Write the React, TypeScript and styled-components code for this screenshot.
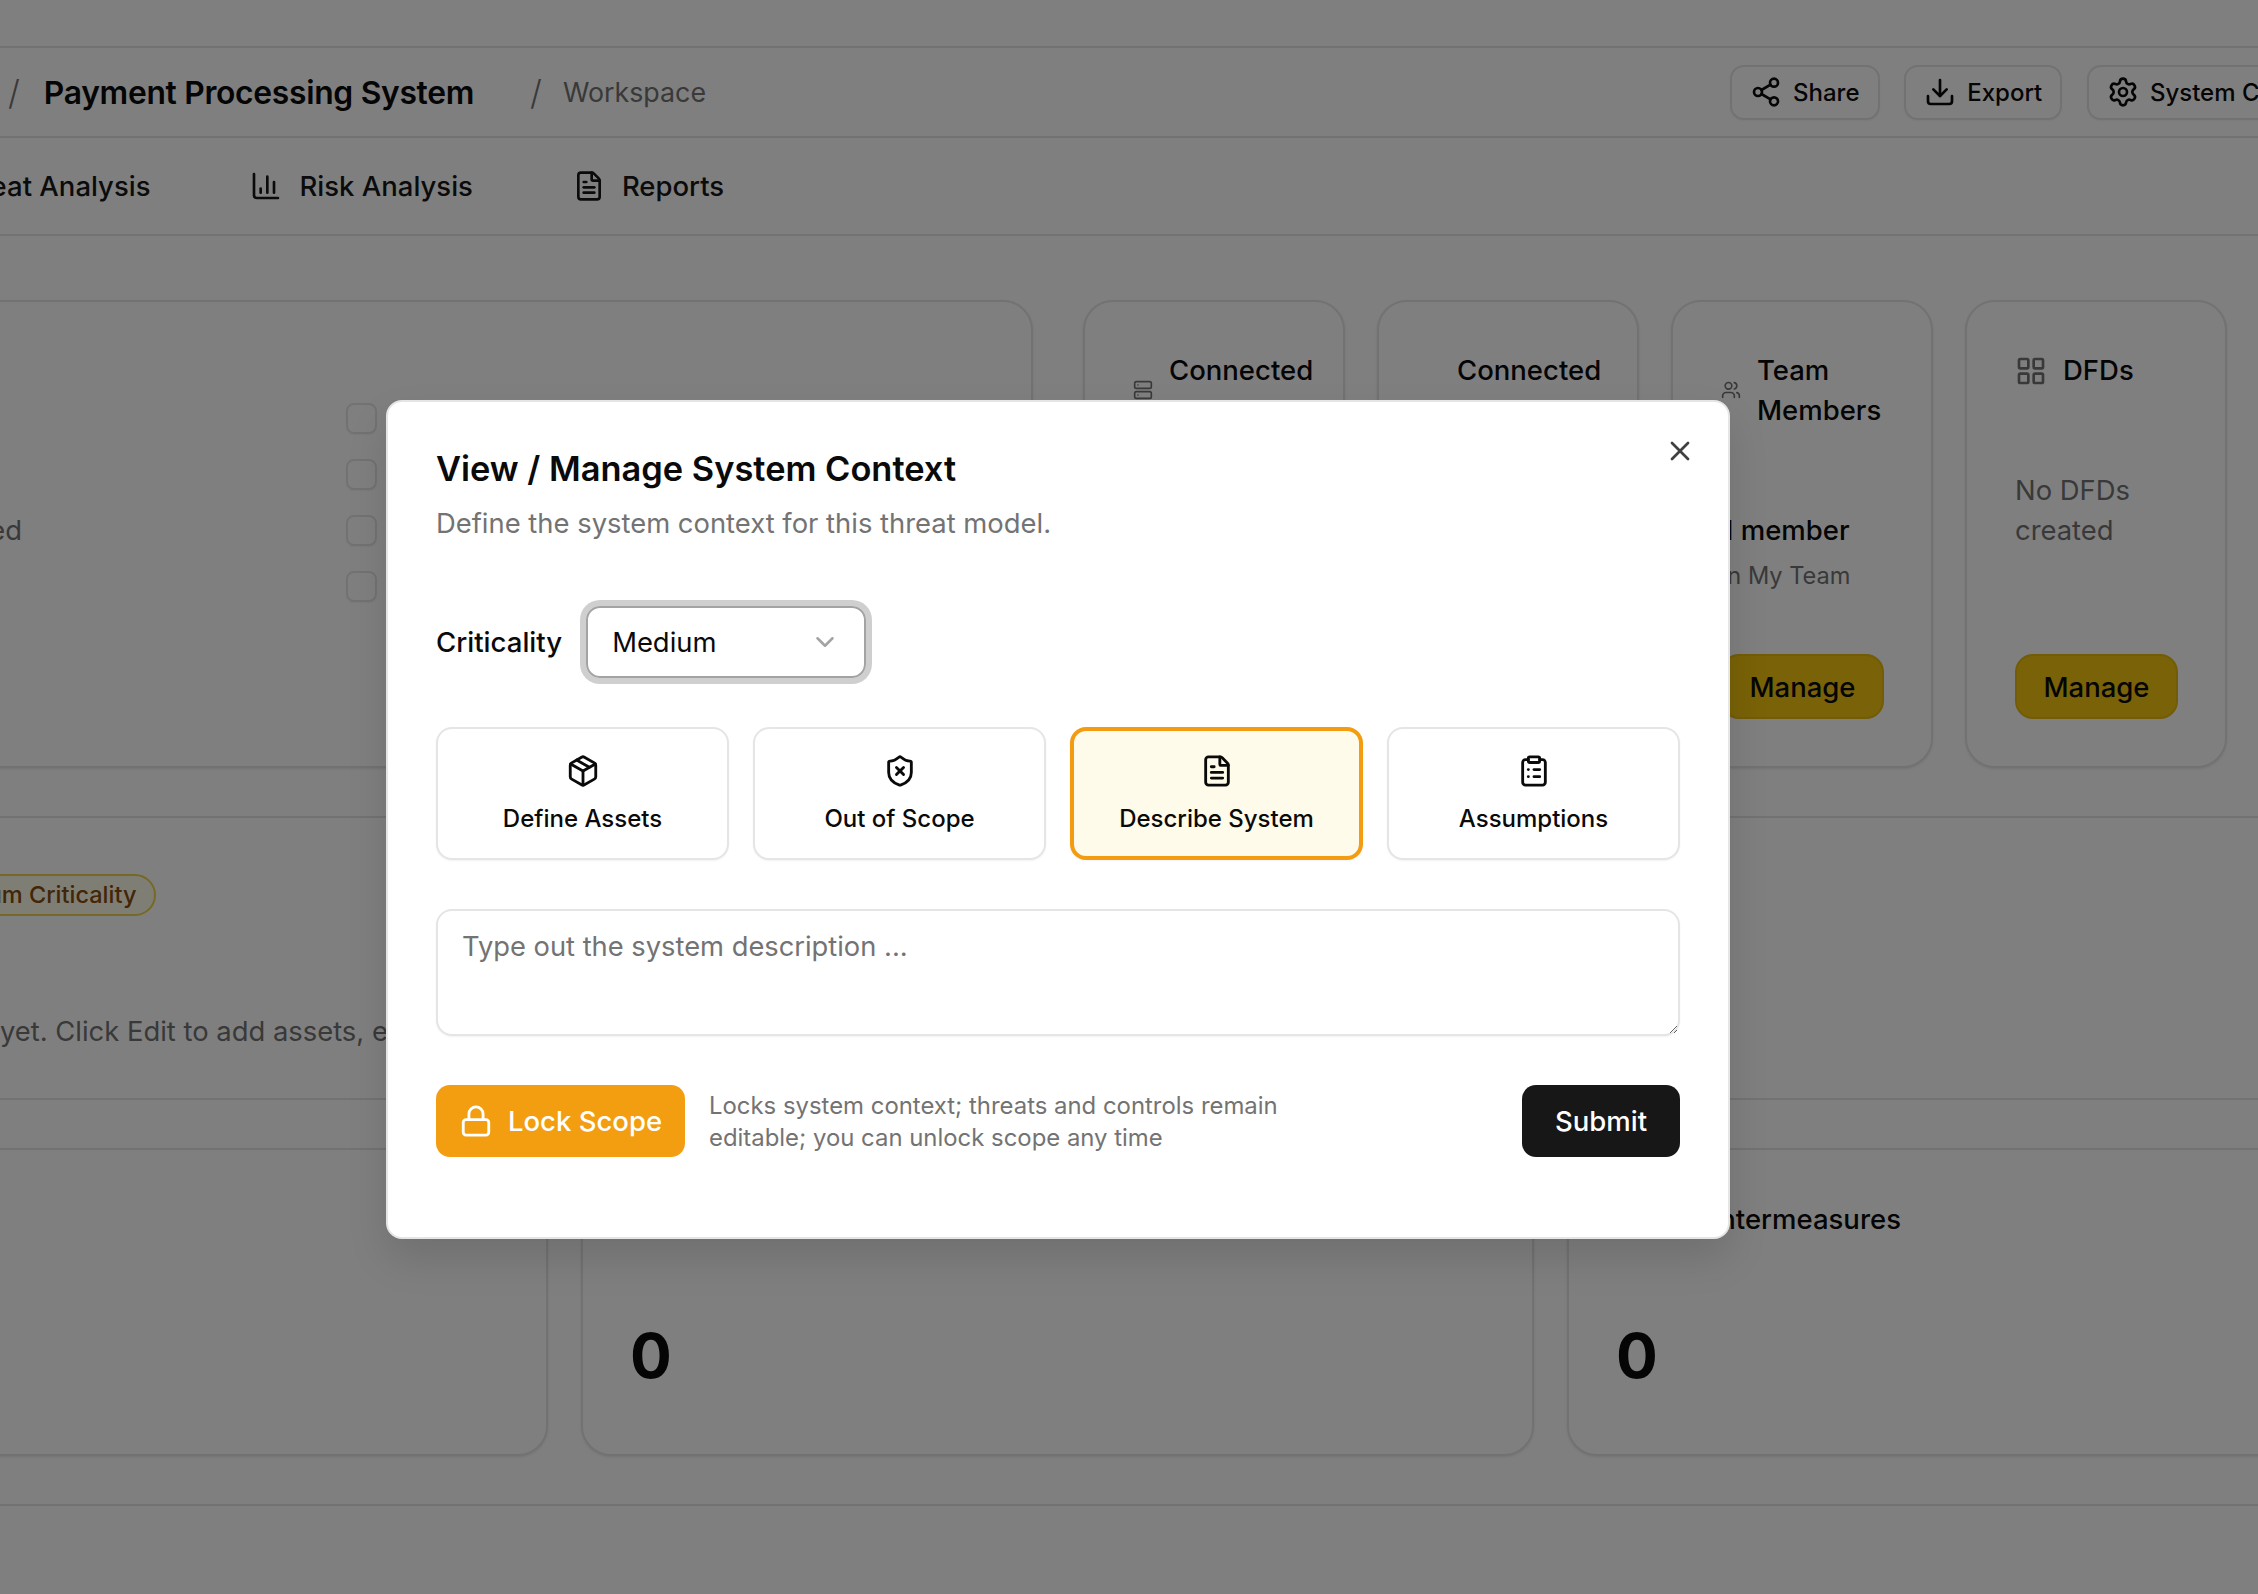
import styled, { createGlobalStyle } from "styled-components";
import {
  ChartColumn,
  ChevronDown,
  ClipboardList,
  Download,
  FileText,
  LayoutGrid,
  Lock,
  Package,
  Server,
  Settings,
  Share2,
  ShieldAlert,
  ShieldX,
  Users,
  X,
} from "lucide-react";

const GlobalStyle = createGlobalStyle`
  html, body {
    margin: 0;
    height: 100%;
    background: #fff;
    overflow: hidden;
    font-family: "Inter", "Liberation Sans", sans-serif;
    color: #0a0a0a;
  }
  * {
    box-sizing: border-box;
  }
`;

const Viewport = styled.div`
  width: 2258px;
  height: 1594px;
  overflow: hidden;
  position: relative;
`;

// the app is wider than the window here, so it starts left of the edge
const Shell = styled.div`
  width: 3000px;
  margin-left: -420px;
`;

const TopStrip = styled.div`
  height: 48px;
  border-bottom: 2px solid #e5e5e5;
`;

const HeaderRow = styled.header`
  height: 90px;
  border-bottom: 2px solid #e5e5e5;
  display: flex;
  align-items: center;
  padding-left: 221px;
`;

const Crumb = styled.span`
  font-size: 26.8px;
  color: #737373;
`;

const CurrentCrumb = styled(Crumb)`
  margin-left: -3px;
`;

const Slash = styled.span`
  font-size: 34px;
  font-weight: 300;
  color: #737373;
  margin: 0 24px;
`;

const SystemName = styled.h1`
  margin: 0 32px 0 0;
  font-size: 31.8px;
  font-weight: 600;
  letter-spacing: -0.3px;
  color: #0a0a0a;
`;

const HeaderActions = styled.div`
  margin-left: 1024px;
  display: flex;
  gap: 24.7px;
`;

const OutlineButton = styled.button`
  height: 55px;
  padding: 0 18px;
  display: flex;
  align-items: center;
  gap: 11px;
  background: #fff;
  border: 2px solid #e5e5e5;
  border-radius: 14px;
  box-shadow: 0 1px 2px rgba(0, 0, 0, 0.05);
  font: 500 24px "Inter", sans-serif;
  color: #0a0a0a;
`;

const TabRow = styled.nav`
  height: 98px;
  border-bottom: 2px solid #e5e5e5;
  display: flex;
  align-items: center;
  gap: 100px;
  padding-left: 317px;
`;

const Tab = styled.div`
  display: flex;
  align-items: center;
  gap: 17px;
  font-size: 27.5px;
  font-weight: 500;
  color: #171717;
`;

const OverviewSection = styled.section`
  display: flex;
  gap: 50px;
  padding: 64px 0 48px 15px;
  border-bottom: 2px solid #e5e5e5;
`;

const Card = styled.div`
  background: #fff;
  border: 2px solid #e5e5e5;
  border-radius: 30px;
  box-shadow: 0 1px 3px rgba(0, 0, 0, 0.1);
`;

const ScopeCard = styled(Card)`
  width: 1438px;
  height: 468px;
  display: flex;
  padding: 101px 0 0 0;
`;

const ScopeStatus = styled.div`
  width: 425px;
  padding-top: 110px;
  text-align: right;
  font-size: 27.4px;
  color: #737373;
`;

const ScopeList = styled.ul`
  list-style: none;
  margin: 0 0 0 324px;
  padding: 0;
  display: flex;
  flex-direction: column;
  gap: 25px;
`;

const ScopeItem = styled.li`
  display: flex;
  align-items: center;
  gap: 16px;
  font-size: 24px;
`;

const Checkbox = styled.span`
  width: 31px;
  height: 31px;
  border: 2px solid #e5e5e5;
  border-radius: 8px;
  box-shadow: 0 1px 2px rgba(0, 0, 0, 0.05);
`;

const SummaryGrid = styled.div`
  display: grid;
  grid-template-columns: repeat(4, 262px);
  gap: 32px;
`;

const SummaryCard = styled(Card)`
  height: 468px;
  padding: 48px 48px 47px 48px;
  display: flex;
  flex-direction: column;
`;

const SummaryTitle = styled.div`
  display: flex;
  gap: 16px;
  min-height: 80px;
  align-items: flex-start;
  font-size: 27.5px;
  font-weight: 500;
  line-height: 40px;
  color: #0a0a0a;
  svg {
    color: #737373;
  }
`;

const TitleIcon = styled.span<{ $width: number; $top: number }>`
  flex: 0 0 ${(p) => p.$width}px;
  margin-top: ${(p) => p.$top}px;
  display: flex;
  justify-content: center;
`;

const SummaryBody = styled.div`
  flex: 1;
  padding-top: 40px;
`;

const MemberCount = styled.div`
  margin: 40px 0 0 1px;
  font-size: 27.5px;
  font-weight: 500;
  line-height: 40px;
`;

const MemberNote = styled.div`
  margin-top: 10px;
  font-size: 23.6px;
  line-height: 32px;
  color: #737373;
`;

const EmptyNote = styled.div`
  font-size: 27.4px;
  line-height: 40px;
  color: #737373;
`;

const ManageButton = styled.button`
  align-self: flex-start;
  width: 163px;
  height: 65px;
  background: #f2c40f;
  border: 2px solid #e4b80c;
  border-radius: 18px;
  font: 500 27.5px "Inter", sans-serif;
  color: #0a0a0a;
`;

const DetailSection = styled.section`
  height: 282px;
  padding: 56px 0 0 332px;
  border-bottom: 2px solid #e5e5e5;
`;

const Badge = styled.span`
  display: inline-block;
  height: 42px;
  line-height: 38px;
  padding: 0 18px;
  border: 2px solid #ead34b;
  border-radius: 21px;
  background: #fefce8;
  font-size: 23.5px;
  font-weight: 500;
  color: #854d0e;
`;

const DetailText = styled.p`
  margin: 95px 0 0 -162px;
  font-size: 27.4px;
  line-height: 40px;
  color: #737373;
`;

const MetricsSection = styled.section`
  display: grid;
  grid-template-columns: repeat(3, 953px);
  gap: 33px;
  padding: 48px 0 48px 15px;
  border-bottom: 2px solid #e5e5e5;
`;

const MetricCard = styled(Card)`
  height: 308px;
  padding: 51px 47px;
`;

const MetricTitle = styled.div`
  display: flex;
  align-items: center;
  gap: 23px;
  font-size: 27.5px;
  font-weight: 500;
  line-height: 36px;
`;

const MetricValue = styled.div`
  margin-top: 82px;
  font-size: 62px;
  font-weight: 700;
  line-height: 74px;
  color: #0a0a0a;
`;

const Backdrop = styled.div`
  position: absolute;
  inset: 0;
  background: rgba(0, 0, 0, 0.5);
`;

const Modal = styled.div`
  position: absolute;
  left: 386px;
  top: 400px;
  width: 1344px;
  height: 839px;
  padding: 47px 48px 0 48px;
  background: #fff;
  border: 2px solid #e5e5e5;
  border-radius: 16px;
  box-shadow: 0 20px 40px rgba(0, 0, 0, 0.12);
`;

const CloseButton = styled.button`
  position: absolute;
  right: 32px;
  top: 33px;
  width: 32px;
  height: 32px;
  padding: 0;
  display: flex;
  background: none;
  border: 0;
  color: #404040;
`;

const ModalTitle = styled.h2`
  margin: 0;
  font-size: 34.4px;
  font-weight: 600;
  line-height: 40px;
  color: #0a0a0a;
`;

const ModalSubtitle = styled.p`
  margin: 14px 0 0;
  font-size: 27.4px;
  line-height: 40px;
  color: #737373;
`;

const CriticalityRow = styled.div`
  margin-top: 63px;
  display: flex;
  align-items: center;
  gap: 24px;
`;

const FieldLabel = styled.label`
  font-size: 27.6px;
  font-weight: 500;
`;

const SelectBox = styled.div`
  width: 280px;
  height: 72px;
  padding: 0 24px;
  display: flex;
  align-items: center;
  justify-content: space-between;
  border: 2px solid #a3a3a3;
  border-radius: 14px;
  box-shadow: 0 0 0 6px #cfcfcf;
  font-size: 27.4px;
  color: #0a0a0a;
  svg {
    color: #a3a3a3;
  }
`;

const OptionGrid = styled.div`
  margin-top: 49px;
  display: grid;
  grid-template-columns: repeat(4, 293px);
  gap: 24px;
`;

const OptionTile = styled.button<{ $active?: boolean }>`
  height: 133px;
  display: flex;
  flex-direction: column;
  align-items: center;
  justify-content: center;
  gap: 16px;
  padding: 0 0 1px;
  background: ${(p) => (p.$active ? "#fefbeb" : "#fff")};
  border: ${(p) => (p.$active ? "4px solid #f39c12" : "2px solid #e5e5e5")};
  border-radius: 16px;
  box-shadow: 0 1px 2px rgba(0, 0, 0, 0.05);
  font: 500 24px "Inter", sans-serif;
  color: #0a0a0a;
`;

const Description = styled.textarea`
  display: block;
  margin-top: 49px;
  width: 100%;
  height: 127px;
  padding: 16px 24px;
  border: 2px solid #e5e5e5;
  border-radius: 16px;
  box-shadow: 0 1px 2px rgba(0, 0, 0, 0.05);
  outline: none;
  font: 400 27.3px/40px "Inter", sans-serif;
  color: #0a0a0a;
  &::placeholder {
    color: #737373;
  }
`;

const ModalFooter = styled.div`
  margin-top: 49px;
  display: flex;
  align-items: center;
`;

const LockButton = styled.button`
  height: 72px;
  width: 249px;
  display: flex;
  align-items: center;
  justify-content: center;
  gap: 15px;
  background: #f39e10;
  border: 0;
  border-radius: 14px;
  font: 500 27.5px "Inter", sans-serif;
  color: #fff;
`;

const LockHint = styled.p`
  margin: 2px 0 0 24px;
  width: 640px;
  font-size: 23.9px;
  line-height: 32px;
  color: #737373;
`;

const SubmitButton = styled.button`
  margin-left: auto;
  width: 158px;
  height: 72px;
  background: #171717;
  border: 0;
  border-radius: 14px;
  font: 500 27.5px "Inter", sans-serif;
  color: #fff;
`;

const scopeRows = ["Assets", "Out of scope", "Description", "Assumptions"];

const options = [
  { label: "Define Assets", Icon: Package },
  { label: "Out of Scope", Icon: ShieldX },
  { label: "Describe System", Icon: FileText, active: true },
  { label: "Assumptions", Icon: ClipboardList },
];

export default function App() {
  return (
    <Viewport>
      <GlobalStyle />
      <Shell>
        <TopStrip />
        <HeaderRow>
          <Crumb>Threat Models</Crumb>
          <Slash>/</Slash>
          <SystemName>Payment Processing System</SystemName>
          <Slash>/</Slash>
          <CurrentCrumb>Workspace</CurrentCrumb>
          <HeaderActions>
            <OutlineButton>
              <Share2 size={32} />
              Share
            </OutlineButton>
            <OutlineButton>
              <Download size={32} />
              Export
            </OutlineButton>
            <OutlineButton>
              <Settings size={32} />
              System Context
            </OutlineButton>
          </HeaderActions>
        </HeaderRow>
        <TabRow>
          <Tab>
            <ShieldAlert size={32} />
            Threat Analysis
          </Tab>
          <Tab>
            <ChartColumn size={32} />
            Risk Analysis
          </Tab>
          <Tab>
            <FileText size={32} />
            Reports
          </Tab>
        </TabRow>
        <OverviewSection>
          <ScopeCard>
            <ScopeStatus>Scope not yet defined</ScopeStatus>
            <ScopeList>
              {scopeRows.map((row) => (
                <ScopeItem key={row}>
                  <Checkbox />
                  {row}
                </ScopeItem>
              ))}
            </ScopeList>
          </ScopeCard>
          <SummaryGrid>
            <SummaryCard>
              <SummaryTitle>
                <TitleIcon $width={17} $top={30}>
                  <Server size={20} />
                </TitleIcon>
                <span>Connected Systems</span>
              </SummaryTitle>
            </SummaryCard>
            <SummaryCard>
              <SummaryTitle>
                <TitleIcon $width={14} $top={30} />
                <span>Connected Clouds</span>
              </SummaryTitle>
            </SummaryCard>
            <SummaryCard>
              <SummaryTitle>
                <TitleIcon $width={20} $top={30}>
                  <Users size={20} />
                </TitleIcon>
                <span>Team Members</span>
              </SummaryTitle>
              <SummaryBody>
                <MemberCount>1 member</MemberCount>
                <MemberNote>In My Team</MemberNote>
              </SummaryBody>
              <ManageButton>Manage</ManageButton>
            </SummaryCard>
            <SummaryCard>
              <SummaryTitle>
                <TitleIcon $width={29} $top={5}>
                  <LayoutGrid size={32} />
                </TitleIcon>
                <span>DFDs</span>
              </SummaryTitle>
              <SummaryBody>
                <EmptyNote>No DFDs created</EmptyNote>
              </SummaryBody>
              <ManageButton>Manage</ManageButton>
            </SummaryCard>
          </SummaryGrid>
        </OverviewSection>
        <DetailSection>
          <Badge>Medium Criticality</Badge>
          <DetailText>No system context yet. Click Edit to add assets, exclusions and more.</DetailText>
        </DetailSection>
        <MetricsSection>
          <MetricCard>
            <MetricTitle>Threats</MetricTitle>
            <MetricValue>0</MetricValue>
          </MetricCard>
          <MetricCard>
            <MetricTitle>Controls</MetricTitle>
            <MetricValue>0</MetricValue>
          </MetricCard>
          <MetricCard>
            <MetricTitle>
              <ShieldAlert size={27} />
              Countermeasures
            </MetricTitle>
            <MetricValue>0</MetricValue>
          </MetricCard>
        </MetricsSection>
      </Shell>
      <Backdrop />
      <Modal>
        <CloseButton>
          <X size={32} />
        </CloseButton>
        <ModalTitle>View / Manage System Context</ModalTitle>
        <ModalSubtitle>Define the system context for this threat model.</ModalSubtitle>
        <CriticalityRow>
          <FieldLabel>Criticality</FieldLabel>
          <SelectBox>
            Medium
            <ChevronDown size={30} />
          </SelectBox>
        </CriticalityRow>
        <OptionGrid>
          {options.map(({ label, Icon, active }) => (
            <OptionTile key={label} $active={active}>
              <Icon size={34} />
              {label}
            </OptionTile>
          ))}
        </OptionGrid>
        <Description placeholder="Type out the system description ..." />
        <ModalFooter>
          <LockButton>
            <Lock size={34} />
            Lock Scope
          </LockButton>
          <LockHint>Locks system context; threats and controls remain editable; you can unlock scope any time</LockHint>
          <SubmitButton>Submit</SubmitButton>
        </ModalFooter>
      </Modal>
    </Viewport>
  );
}
